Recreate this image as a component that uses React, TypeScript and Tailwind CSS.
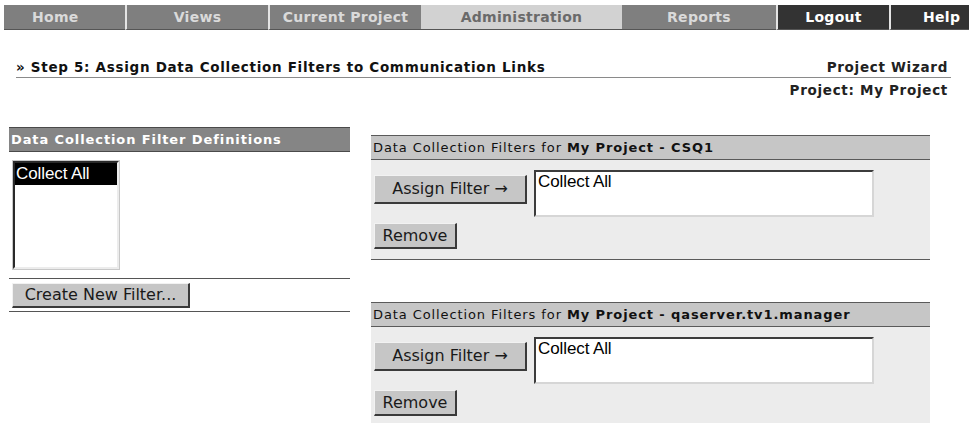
const navItems = [
  { label: "Home", w: "w-[121px]", tone: "gray", align: "justify-start pl-[28px]" },
  { label: "Views", w: "w-[143px]", tone: "gray", align: "justify-center" },
  { label: "Current Project", w: "w-[153px]", tone: "gray", align: "justify-center" },
  { label: "Administration", w: "w-[201px]", tone: "active", align: "justify-center" },
  { label: "Reports", w: "w-[154px]", tone: "gray", align: "justify-center" },
  { label: "Logout", w: "w-[113px]", tone: "dark", align: "justify-center" },
  { label: "Help", w: "flex-1", tone: "dark", align: "justify-start pl-[32px]" },
];

const toneClass: Record<string, string> = {
  gray: "bg-[#7f7f7f] text-[#dadada]",
  active: "bg-[#d2d2d2] text-[#6a6a6a]",
  dark: "bg-[#333333] text-white",
};

const verdana = "font-['DejaVu_Sans',Verdana,sans-serif]";
const helv = "font-['Liberation_Sans',Arial,sans-serif]";

function Button({ label, className }: { label: string; className: string }) {
  return (
    <button
      type="button"
      className={`${verdana} ${className} flex items-center justify-center bg-[#c6c6c6] text-[16px] text-[#1a1a1a] border-t border-l border-t-[#f2f2f2] border-l-[#f2f2f2] border-b-2 border-r-2 border-b-[#3a3a3a] border-r-[#3a3a3a]`}
    >
      {label}
    </button>
  );
}

function FilterPanel({ link }: { link: string }) {
  return (
    <div className="w-[559px]">
      <div className={`${verdana} h-[25px] flex items-center pl-[2px] bg-[#c6c6c6] border-t border-b border-[#5a5a5a] text-[13px] tracking-[0.9px] text-[#111]`}>
        Data Collection Filters for&nbsp;<b>My Project - {link}</b>
      </div>
      <div className="bg-[#ececec] border-b border-[#5a5a5a] pl-[3px] pt-[10px] pb-[10px]">
        <div className="flex">
          <Button label="Assign Filter →" className="w-[153px] h-[29px] mt-[5px]" />
          <div className={`${helv} ml-[7px] w-[340px] h-[47px] bg-white border-2 border-t-[#3c3c3c] border-l-[#3c3c3c] border-b-[#d6d6d6] border-r-[#d6d6d6] text-[17px] tracking-[-0.1px] leading-[19px] pl-[2px] text-black`}>
            Collect All
          </div>
        </div>
        <Button label="Remove" className="w-[83px] h-[26px] mt-[6px]" />
      </div>
    </div>
  );
}

export default function App() {
  return (
    <div className="w-[969px] h-[423px] bg-white overflow-hidden">
      <nav className="flex mt-[5px] ml-[4px] h-[25px]">
        {navItems.map((item, i) => (
          <div
            key={item.label}
            className={`${item.w} ${toneClass[item.tone]} ${item.align} ${verdana} flex items-center text-[14px] font-bold tracking-[0.3px] border-b border-b-[#555] ${
              i > 0 && item.tone !== "active" && navItems[i - 1].tone !== "active" ? "border-l-2 border-l-[#e4e4e4]" : ""
            }`}
          >
            {item.label}
          </div>
        ))}
      </nav>

      <div className={`${verdana} mx-[16px] w-[935px] mt-[29px]`}>
        <div className="flex justify-between items-end border-b border-[#8a8a8a] pb-[2px]">
          <h1 className="text-[13.5px] font-bold tracking-[0.7px] text-[#111] leading-[16px]">» Step 5: Assign Data Collection Filters to Communication Links</h1>
          <span className="text-[13.5px] font-bold tracking-[0.7px] text-[#222] leading-[16px] pr-[3px]">Project Wizard</span>
        </div>
        <div className="text-right text-[13.5px] font-bold tracking-[0.7px] text-[#222] leading-[16px] pr-[3px] mt-[4px]">Project: My Project</div>
      </div>

      <div className="flex mt-[29px] ml-[9px]">
        <div className="w-[341px]">
          <div className={`${verdana} h-[25px] flex items-center pl-[2px] bg-[#858585] border-t border-b border-[#4a4a4a] text-[13px] font-bold tracking-[0.9px] text-white`}>
            Data Collection Filter Definitions
          </div>
          <div className="pl-[3px] pt-[8px] pb-[8px]">
            <div className="w-[108px] h-[110px] border border-[#c8c8c8] bg-white">
              <div className="h-full border-2 border-t-[#2a2a2a] border-l-[#2a2a2a] border-b-[#ececec] border-r-[#ececec]">
                <div className={`${helv} bg-black text-white text-[17px] tracking-[-0.1px] leading-[22px] pl-[1px]`}>Collect All</div>
              </div>
            </div>
          </div>
          <div className="border-t border-[#555] pt-[4px] pl-[3px] pb-[3px] border-b">
            <Button label="Create New Filter..." className="w-[178px] h-[25px]" />
          </div>
        </div>

        <div className="ml-[21px] mt-[8px] flex flex-col gap-[42px]">
          <FilterPanel link="CSQ1" />
          <FilterPanel link="qaserver.tv1.manager" />
        </div>
      </div>
    </div>
  );
}
